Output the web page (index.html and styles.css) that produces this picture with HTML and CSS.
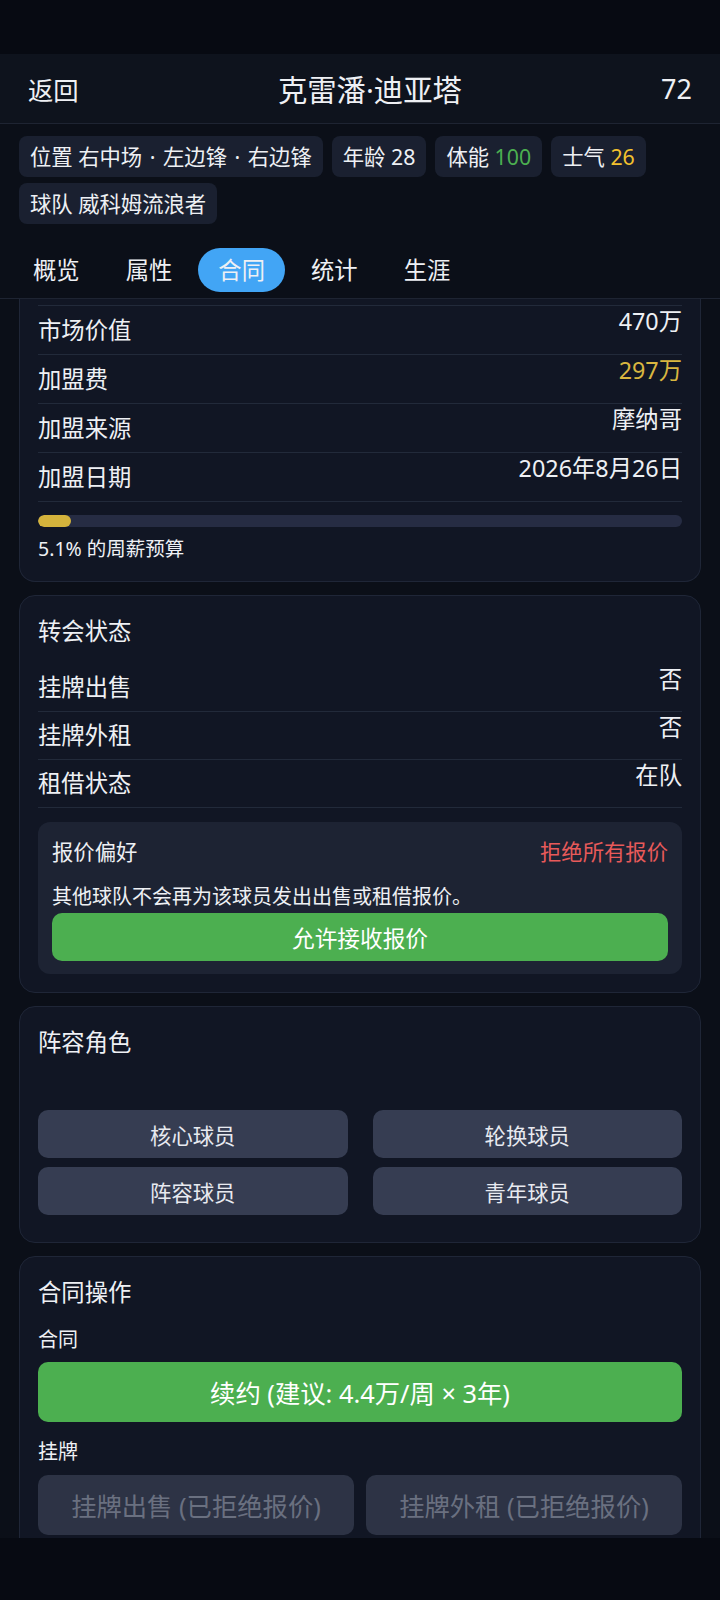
FILE: index.html
```html
<!DOCTYPE html>
<html lang="zh-CN">
<head>
  <meta charset="UTF-8" />
  <meta name="viewport" content="width=device-width, initial-scale=1.0" />
  <title>克雷潘·迪亚塔</title>
  <link rel="stylesheet" href="styles.css">
</head>
<body>
  <div class="statusbar"></div>

  <div class="header">
    <span class="back">返回</span>
    <span class="name">克雷潘·迪亚塔</span>
    <span class="rating">72</span>
  </div>

  <div class="chips">
    <span class="chip">位置 右中场 <span class="sep">·</span> 左边锋 <span class="sep">·</span> 右边锋</span>
    <span class="chip">年龄 28</span>
    <span class="chip">体能 <span class="green">100</span></span>
    <span class="chip">士气 <span class="yellow">26</span></span>
    <span class="chip">球队 威科姆流浪者</span>
  </div>

  <div class="tabs">
    <span class="tab">概览</span>
    <span class="tab">属性</span>
    <span class="tab active">合同</span>
    <span class="tab">统计</span>
    <span class="tab">生涯</span>
  </div>

  <div class="content">
    <!-- list is scrolled: top of this card is out of view -->
    <div class="card scrolled">
      <div class="rows">
        <div class="row tall"><span class="label">市场价值</span><span class="val">470万</span></div>
        <div class="row tall"><span class="label">加盟费</span><span class="val gold">297万</span></div>
        <div class="row tall"><span class="label">加盟来源</span><span class="val">摩纳哥</span></div>
        <div class="row tall"><span class="label">加盟日期</span><span class="val">2026年8月26日</span></div>
      </div>
      <div class="bar"><div class="bar-fill" style="width: 5.1%"></div></div>
      <div class="bar-text">5.1% 的周薪预算</div>
    </div>

    <div class="card">
      <div class="card-title">转会状态</div>
      <div class="row"><span class="label">挂牌出售</span><span class="val">否</span></div>
      <div class="row"><span class="label">挂牌外租</span><span class="val">否</span></div>
      <div class="row"><span class="label">租借状态</span><span class="val">在队</span></div>
      <div class="offer">
        <div class="offer-head">
          <span>报价偏好</span>
          <span class="red">拒绝所有报价</span>
        </div>
        <div class="offer-desc">其他球队不会再为该球员发出出售或租借报价。</div>
        <button class="btn-green">允许接收报价</button>
      </div>
    </div>

    <div class="card">
      <div class="card-title">阵容角色</div>
      <div class="roles">
        <button class="role">核心球员</button>
        <button class="role">轮换球员</button>
        <button class="role">阵容球员</button>
        <button class="role">青年球员</button>
      </div>
    </div>

    <div class="card">
      <div class="card-title">合同操作</div>
      <div class="sub">合同</div>
      <button class="btn-green big">续约 (建议: 4.4万/周 × 3年)</button>
      <div class="sub sub2">挂牌</div>
      <div class="listing">
        <button class="btn-off">挂牌出售 (已拒绝报价)</button>
        <button class="btn-off">挂牌外租 (已拒绝报价)</button>
      </div>
    </div>
  </div>

  <div class="navbar"></div>
</body>
</html>
```

FILE: styles.css
```css
body {
  margin: 0;
  background: #0b0f18;
  color: #eef0f4;
  font-family: "Noto Sans", "Noto Sans CJK SC", sans-serif;
}
.statusbar {
  height: 54px;
  background: #070a12;
}
.header {
  height: 69px;
  padding: 0 28px;
  display: flex;
  align-items: center;
  justify-content: space-between;
  background: #0e131d;
  border-bottom: 1px solid #1e2432;
  font-size: 25.33px;
}
.header .name {
  font-size: 29.33px;
}
.header .rating {
  font-size: 27px;
}
.chips {
  display: flex;
  flex-wrap: wrap;
  gap: 6px 9px;
  padding: 12px 19px 18px;
}
.chip {
  background: #1a2030;
  border-radius: 8px;
  padding: 6px 11px;
  font-size: 21.33px;
  line-height: 29px;
}
.chip .sep {
  margin: 0 2px;
}
.green { color: #4caf50; }
.yellow { color: #f2c12e; }
.gold { color: #d9b640; }
.red { color: #e85a5a; }
.tabs {
  display: flex;
  gap: 6px;
  padding: 6px 13px;
  border-bottom: 1px solid #1e2432;
}
.tab {
  height: 44px;
  line-height: 44px;
  padding: 0 20px;
  border-radius: 22px;
  font-size: 23.33px;
}
.tab.active {
  background: #42a5f5;
}
.content {
  height: 1239px;
  overflow: hidden;
}
.card {
  margin: 0 19px 13px;
  padding: 19px 18px 18px;
  background: #111624;
  border: 1px solid #1f2637;
  border-radius: 16px;
}
.card.scrolled {
  padding-top: 6px;
  border-top: none;
  border-radius: 0 0 16px 16px;
}
.rows {
  border-top: 1px solid #222a3a;
}
.card-title {
  font-size: 23.33px;
  line-height: 32px;
  margin-bottom: 17px;
}
.row {
  display: flex;
  justify-content: space-between;
  align-items: center;
  height: 47px;
  border-bottom: 1px solid #222a3a;
  font-size: 23.33px;
}
.row.tall {
  height: 48px;
}
.row .label {
  line-height: 31px;
}
.row .val {
  align-self: flex-start;
  line-height: 23px;
  margin-top: 4px;
}
.bar {
  margin-top: 13px;
  height: 12px;
  border-radius: 6px;
  background: #262c43;
  overflow: hidden;
}
.bar-fill {
  height: 100%;
  border-radius: 6px;
  background: #d4b33c;
}
.bar-text {
  margin-top: 8px;
  font-size: 19.5px;
  line-height: 28px;
}
.offer {
  margin-top: 14px;
  padding: 14px 14px 13px;
  background: #1d2333;
  border-radius: 12px;
}
.offer-head {
  display: flex;
  justify-content: space-between;
  font-size: 21.33px;
  line-height: 31px;
}
.offer-desc {
  margin-top: 15px;
  font-size: 20px;
  line-height: 30px;
}
button {
  font-family: inherit;
  border: none;
  color: #fff;
  cursor: pointer;
}
.btn-green {
  display: block;
  width: 100%;
  margin-top: 1px;
  height: 48px;
  border-radius: 10px;
  background: #4caf50;
  font-size: 22.67px;
}
.btn-green.big {
  height: 60px;
  margin-top: 7px;
  font-size: 25.33px;
}
.roles {
  display: grid;
  grid-template-columns: 1fr 1fr;
  gap: 9px 25px;
  margin-top: 52px;
  padding-bottom: 9px;
}
.role {
  height: 48px;
  border-radius: 10px;
  background: #363d52;
  color: #e8eaf0;
  font-size: 21.33px;
}
.sub {
  font-size: 20px;
  line-height: 30px;
}
.sub2 {
  margin-top: 15px;
}
.listing {
  display: grid;
  grid-template-columns: 1fr 1fr;
  gap: 12px;
  margin-top: 8px;
}
.btn-off {
  height: 60px;
  border-radius: 10px;
  background: #2d3345;
  color: #6a7080;
  font-size: 25.33px;
}
.navbar {
  height: 62px;
  background: #070a12;
}
```
